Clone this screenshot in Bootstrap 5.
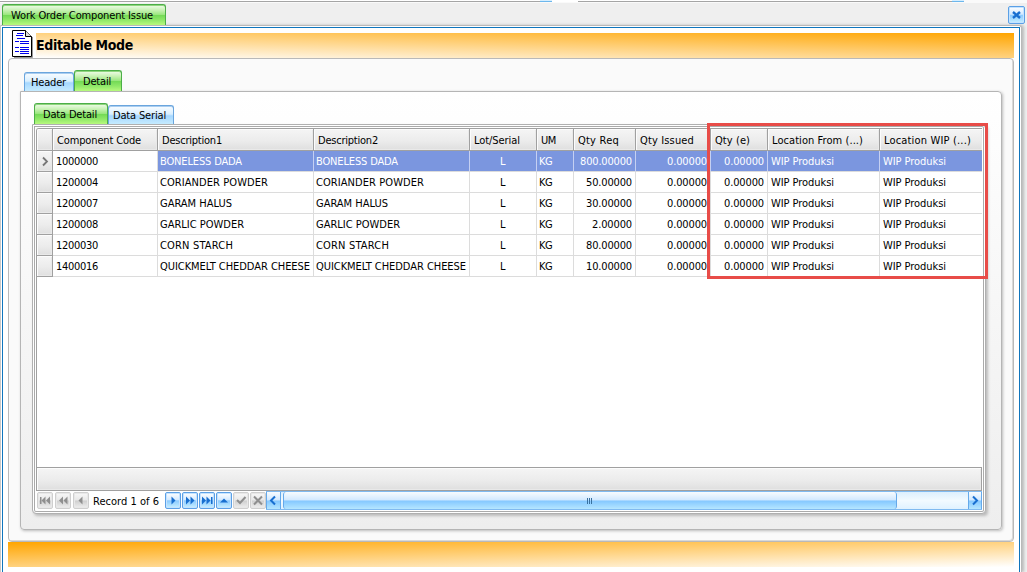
<!DOCTYPE html>
<html lang="en">
<head>
<meta charset="utf-8">
<title>Work Order Component Issue</title>
<link href="https://cdn.jsdelivr.net/npm/bootstrap@5.3.0/dist/css/bootstrap.min.css" rel="stylesheet">
<style>
body{width:1027px;height:572px;overflow:hidden;background:#efefef;font:11px/14px "DejaVu Sans Condensed","DejaVu Sans",sans-serif;font-stretch:condensed;color:#000}
.fit{display:inline-block;white-space:nowrap}
.topstrip{height:3px;background:#fafafa}
.topstrip i{display:block;height:2px;border-bottom:1px solid #a5a5a5;background:#fff}
.topstrip i.cap{border-color:#6db7ec;background:#d5eeff;width:12px}
.tabx{border:1px solid #4cae48;border-bottom:0;border-radius:3px 3px 0 0;background:linear-gradient(#f1fceb 0,#c9f2b6 25%,#9be77f 48%,#74da56 52%,#8fe868 75%,#b8f97e);box-shadow:inset 0 1px #8fd57e;height:21px;padding-left:8px;padding-top:4px;white-space:nowrap}
.tabx.off{border-color:#6aa5dd;height:19px;background:linear-gradient(#fafdff 0,#d9efff 45%,#a5d7ff 55%,#b4e0ff 75%,#c5ebff);box-shadow:inset 0 1px #a9cdf0;padding-top:3px}
.docwrap{height:22px;padding-left:2px;border-bottom:0}
.frame{height:547px;width:1022px;border:1px solid #b9b9b9;border-left-color:#c8c8c8;border-bottom:0;background:#fff;padding:1px 1px 0 1px;box-shadow:2px 0 3px #bbb;border-radius:0 3px 0 0}
.frame2{height:545px;border:1px solid #0f75bd;border-bottom:0;padding:5px 5px 0}
.band{height:25px;background:linear-gradient(to bottom left,#ffa500,#fff)}
.band.bot{background:linear-gradient(to bottom right,#ffa500,#fff)}
.p0{height:484px;border:1px solid #b9b9b9;border-radius:4px;background:#fafafa;padding:10px 11px 0;box-shadow:inset -1px -1px #d9d9d9}
.p1{height:439px;border:1px solid #b5b5b5;border-radius:0 4px 4px 4px;background:linear-gradient(#fff,#eee);box-shadow:1px 1px 3px #bbb;padding:11px 0 0 11px}
.p2{width:954px;height:390px;border:1px solid #b0b0b0;border-radius:0 4px 4px 4px;background:#fff;box-shadow:inset 0 0 0 1px #fff,inset 0 0 0 2px #aaa,2px 2px 3px #bbb;padding:3px 0 0 3px}
.gridx{width:946px;height:339px;overflow:hidden;border-left:1px solid #a0a0a0;border-top:1px solid #a0a0a0;border-radius:3px 0 0 0}
.r{display:grid;grid-template-columns:16px 105px 156px 156px 67px 37px 62px 75px 57px 112px 102px;height:21px;line-height:22px}
.r>div{border-right:1px solid #dcdcdc;border-bottom:1px solid #dcdcdc;padding:0 3px;white-space:nowrap;overflow:hidden}
.r:not(.hd)>div:nth-child(3),.r:not(.hd)>div:nth-child(4),.r:not(.hd)>div:nth-child(6){padding-left:2px}
.r>div:last-child{border-right:0}
.r>div:first-child,.hd>div,.foot{background:linear-gradient(#f5f5f5,#ececec 55%,#dfdfdf);box-shadow:inset 1px 1px #fcfcfc,inset -1px -1px #e9e9e9}
.r>div:first-child{border-color:#a0a0a0;padding:0}
.hd{height:22px;line-height:24px}
.hd>div{border-color:#a0a0a0!important;padding:0 4px}
.sel>div:nth-child(n+3){background:#7b96df;color:#fff;border-right-color:#c5d0f2}
.n{text-align:right}
.foot{width:946px;height:24px;border:1px solid #a0a0a0}
.nb{width:16px;height:17px;border:1px solid #5ba0e6;border-radius:2px;background:linear-gradient(#fff,#d4eaff 45%,#8ccbff 52%,#c8f0ff);box-shadow:inset 0 0 0 1px #c5e3ff;color:#186fd0;display:flex;margin-right:1px;flex:none}
.nb svg{display:block;width:14px;height:15px}
.nb.dis{border-color:#cfcfcf;background:linear-gradient(#f8f8f8,#e8e8e8 48%,#cfcfcf 52%,#efefef);box-shadow:inset 0 0 0 1px #e8e8e8;color:#8f8f8f}
.sb{width:716px;height:19px;background:linear-gradient(#dceffe,#f2faff 50%,#e0f2ff);border:1px solid #80baf0;border-width:1px 0}
.sb>div{border:1px solid #65a9ea;border-width:0 1px;background:linear-gradient(#f8fcff,#d4eaff 45%,#86c9ff 54%,#b5e6ff);height:17px;color:#186fd0}
.thumb{width:614px;border-radius:3px;margin:0 0 0 2px}
.hl{position:absolute;left:707px;top:123px;width:281px;height:156px;border:3px solid #e84c48}
</style>
</head>
<body>
<div class="topstrip d-flex"><i style="width:540px"></i><i class="cap"></i><i style="width:26px;border-color:#fff"></i><i style="width:374px"></i><i class="cap"></i></div>
<div class="docwrap d-flex justify-content-between">
 <div class="tabx" style="width:164px;margin-top:1px"><span class="fit" data-w="142">Work Order Component Issue</span></div>
 <div class="nb" style="width:17px;height:18px;margin:3px 2px 0 0"><svg viewBox="0 0 14 15"><path d="M4 5l7 6M11 5l-7 6" stroke="currentColor" stroke-width="2.4"/></svg></div>
</div>
<div class="frame"><div class="frame2">
 <div class="d-flex" style="height:25px">
  <svg width="28" height="28" viewBox="0 0 28 28" style="margin-top:-3px;flex:none;position:relative"><path d="M6 27.500h18.500V7" fill="none" stroke="#999"/><path d="M4.500 .5h13l6 6v20h-19z" fill="#fff" stroke="#000"/><path d="M17.500 .5v6h6" fill="#ddd" stroke="#000"/><path d="M9 3.500h7M8 5.500h7M7 11.500h4M12 11.500h9M12 13.500h9M7 17.500h4M12 17.500h9M12 19.500h9M7 21.500h4M12 21.500h9M12 23.500h9M9 8.500h8" stroke="#00e" shape-rendering="crispEdges"/></svg>
  <div class="band flex-fill"><span class="fit fw-bold" data-w="97" style="font-size:14px;line-height:24px">Editable Mode</span></div>
 </div>
 <div class="p0">
  <div class="d-flex align-items-end" style="height:22px;padding-left:4px">
   <div class="tabx off" style="width:50px;padding-left:6px"><span class="fit" data-w="35">Header</span></div>
   <div class="tabx" style="width:48px"><span class="fit" data-w="28">Detail</span></div>
  </div>
  <div class="p1">
   <div class="d-flex align-items-end" style="height:21px;padding-left:2px">
    <div class="tabx" style="width:74px"><span class="fit" data-w="54">Data Detail</span></div>
    <div class="tabx off" style="width:66px;padding-left:4px"><span class="fit" data-w="53">Data Serial</span></div>
   </div>
   <div class="p2">
    <div class="gridx" id="grid"></div>
    <div class="foot"></div>
    <div class="d-flex" id="nav" style="height:19px"></div>
   </div>
  </div>
 </div>
 <div class="band bot"></div>
</div></div>
<div class="hl"></div>
<script>
const t=(s,w)=>`<span class="fit" data-w="${w}">${s}</span>`;
const names=[['1000000','BONELESS DADA',82,'800.00000',52],['1200004','CORIANDER POWDER',108,'50.00000',46],['1200007','GARAM HALUS',72,'30.00000',46],['1200008','GARLIC POWDER',84,'2.00000',40],['1200030','CORN STARCH',73,'80.00000',46],['1400016','QUICKMELT CHEDDAR CHEESE',150,'10.00000',46]];
const heads=[['Component Code',84],['Description1',60],['Description2',60],['Lot/Serial',46],['UM',15],['Qty Req',41],['Qty Issued',54],['Qty (e)',35],['Location From (...)',91],['Location WIP (...)',87]];
let h='<div class="r hd"><div></div>'+heads.map(([s,w])=>`<div>${t(s,w)}</div>`).join('')+'</div>';
names.forEach(([c,d,w,q,qw],i)=>{
 h+=`<div class="r ${i?'':'sel'}"><div>${i?'':'<svg width="15" height="20" style="display:block"><path d="M6 6.500l4 4-4 4" fill="none" stroke="#777" stroke-width="1.800"/></svg>'}</div><div>${t(c,42)}</div><div>${t(d,w)}</div><div>${t(d,w)}</div><div class="text-center">${t('L',6)}</div><div>${t('KG',13)}</div><div class="n">${t(q,qw)}</div><div class="n">${t('0.00000',40)}</div><div class="n">${t('0.00000',40)}</div><div>${t('WIP Produksi',63)}</div><div>${t('WIP Produksi',63)}</div></div>`;
});
grid.innerHTML=h;
const L='M0 0l-4 4 4 4z',R='M0 0l4 4-4 4z';
const b=(inner,c,mr)=>`<div class="nb ${c}" style="margin:1px ${mr}px 0 0"><svg viewBox="0 0 14 15" fill="currentColor">${inner}</svg></div>`;
const p=(d,x)=>`<path d="${d}" transform="translate(${x} 3.500)"/>`;
nav.innerHTML='<div style="width:1px"></div>'+b('<path d="M2 4h1.500v7h-1.500z"/>'+p(L,7.5)+p(L,12),'dis',2)+b(p(L,7)+p(L,11.5),'dis',2)+b(p(L,8.5),'dis',0)
+`<div style="width:76px;padding:4px 0 0 4px">${t('Record 1 of 6',66)}</div>`
+b(p(R,5.5),'',1)+b(p(R,3)+p(R,7.5),'',1)+b(p(R,2)+p(R,6.5)+'<path d="M11 4h1.500v7h-1.500z"/>','',1)+b('<path d="M3 9.500l4-4 4 4z"/>','',1)
+b('<path d="M3 7l3 3 5.500-6" fill="none" stroke="currentColor" stroke-width="2"/>','dis',1)+b('<path d="M3 3.500l8 8M11 3.500l-8 8" stroke="currentColor" stroke-width="2"/>','dis',0)
+`<div class="sb d-flex"><div style="width:15px"><svg width="13" height="17" class="d-block"><path d="M8 4.500l-4 4 4 4" fill="none" stroke="currentColor" stroke-width="2"/></svg></div><div class="thumb"><svg width="612" height="17" class="d-block"><path d="M303.500 6v6M305.500 6v6M307.500 6v6" stroke="#39719f"/></svg></div><div style="width:14px;margin-left:auto"><svg width="12" height="17" class="d-block"><path d="M4 4.500l4 4-4 4" fill="none" stroke="currentColor" stroke-width="2"/></svg></div></div>`;
// Keep each label at its designed width whatever the font metrics are.
document.querySelectorAll('[data-w]').forEach(e=>{const n=e.textContent.length,w=e.getBoundingClientRect().width,s=(e.dataset.w-w)/n;e.style.letterSpacing=s.toFixed(3)+'px'});
</script>
<script src="https://cdn.jsdelivr.net/npm/bootstrap@5.3.0/dist/js/bootstrap.bundle.min.js"></script>
</body>
</html>
